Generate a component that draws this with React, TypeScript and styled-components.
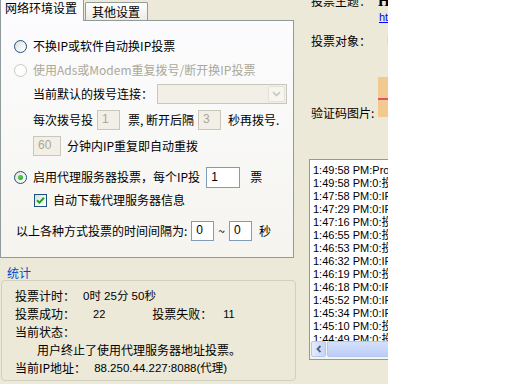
import React from 'react'
import styled, { createGlobalStyle } from 'styled-components'

const GlobalStyle = createGlobalStyle`
  html, body {
    margin: 0;
    padding: 0;
    background: #ffffff;
  }
  body {
    font-family: "Noto Sans CJK SC", sans-serif;
    font-size: 12px;
    color: #000000;
  }
`

const Screen = styled.div`
  width: 512px;
  height: 384px;
  display: flex;
  overflow: hidden;
  background: #ffffff;
`

const Window = styled.div`
  width: 388px;
  height: 384px;
  flex-shrink: 0;
  display: flex;
  overflow: hidden;
  background: #ECE9D8;
`

const LeftPane = styled.div`
  width: 297px;
  flex-shrink: 0;
  display: flex;
  flex-direction: column;
`

const TabStrip = styled.div`
  display: flex;
  align-items: flex-end;
  height: 20px;
  position: relative;
  z-index: 1;
`

const Tab = styled.div<{ $active?: boolean }>`
  box-sizing: border-box;
  height: ${({ $active }) => ($active ? 21 : 18)}px;
  margin-bottom: ${({ $active }) => ($active ? -1 : 0)}px;
  margin-left: ${({ $active }) => ($active ? 0 : 1)}px;
  padding: ${({ $active }) => ($active ? '0 6px 0 4px' : '1px 7px 0 6px')};
  border: 1px solid #919B9C;
  border-top: ${({ $active }) => ($active ? 'none' : '1px solid #919B9C')};
  border-bottom: none;
  border-radius: ${({ $active }) => ($active ? '0' : '2px 2px 0 0')};
  background: ${({ $active }) => ($active ? '#FCFCFE' : 'linear-gradient(#FFFFFF, #ECEBE6)')};
  line-height: 16px;
  white-space: nowrap;
`

const TabPanel = styled.div`
  box-sizing: border-box;
  width: 294px;
  height: 238px;
  padding-top: 14px;
  border: 1px solid #919B9C;
  background: linear-gradient(#FCFCFE, #F5F4EF);
  display: flex;
  flex-direction: column;
`

const OptionRow = styled.div<{ $top: number; $indent: number }>`
  display: flex;
  align-items: center;
  height: 22px;
  margin-top: ${({ $top }) => $top}px;
  padding-left: ${({ $indent }) => $indent}px;
  white-space: nowrap;
  line-height: 14px;
`

const Text = styled.span<{ $gap?: number; $disabled?: boolean }>`
  margin-left: ${({ $gap }) => $gap ?? 0}px;
  color: ${({ $disabled }) => ($disabled ? '#ACA899' : '#000000')};
`

const Radio = styled.span<{ $checked?: boolean; $disabled?: boolean }>`
  box-sizing: border-box;
  width: 13px;
  height: 13px;
  flex-shrink: 0;
  border-radius: 50%;
  border: 1px solid ${({ $disabled }) => ($disabled ? '#CAC8BB' : '#1C5180')};
  background: ${({ $disabled }) =>
    $disabled ? '#FFFFFF' : 'linear-gradient(135deg, #DCDCD7 0%, #FFFFFF 85%)'};
  display: flex;
  align-items: center;
  justify-content: center;
  margin-right: 6px;

  &::after {
    content: '';
    width: 5px;
    height: 5px;
    border-radius: 50%;
    background: radial-gradient(circle at 35% 35%, #55D455, #21A121);
    display: ${({ $checked }) => ($checked ? 'block' : 'none')};
  }
`

const CheckBox = styled.span`
  box-sizing: border-box;
  width: 13px;
  height: 13px;
  flex-shrink: 0;
  margin-right: 6px;
  border: 1px solid #1C5180;
  background: linear-gradient(135deg, #DCDCD7 0%, #FFFFFF 85%);
  display: flex;
  align-items: center;
  justify-content: center;
`

const TextBox = styled.div<{ $width: number; $gap?: number; $disabled?: boolean; $height?: number }>`
  box-sizing: border-box;
  width: ${({ $width }) => $width}px;
  height: ${({ $height }) => $height ?? 20}px;
  margin-left: ${({ $gap }) => $gap ?? 0}px;
  padding-left: 4px;
  border: 1px solid ${({ $disabled }) => ($disabled ? '#C9C7BA' : '#7F9DB9')};
  background: ${({ $disabled }) => ($disabled ? '#F1EFE6' : '#FFFFFF')};
  color: ${({ $disabled }) => ($disabled ? '#ACA899' : '#000000')};
  font-family: "Liberation Sans", sans-serif;
  font-size: 12px;
  line-height: ${({ $height }) => ($height ?? 20) - 3}px;
  flex-shrink: 0;
`

const ComboBox = styled.div`
  box-sizing: border-box;
  width: 130px;
  height: 20px;
  margin-left: 4px;
  border: 1px solid #C9C7BA;
  background: #F1EFE6;
  display: flex;
  justify-content: flex-end;
  padding: 1px;
`

const ComboButton = styled.div`
  box-sizing: border-box;
  width: 17px;
  height: 16px;
  border: 1px solid #E4E2D8;
  border-radius: 2px;
  background: #F6F5EF;
  display: flex;
  align-items: center;
  justify-content: center;
`

const GroupLabel = styled.div`
  margin: 8px 0 0 7px;
  height: 14px;
  line-height: 14px;
  color: #0046D5;
`

const GroupBox = styled.div`
  box-sizing: border-box;
  width: 295px;
  height: 101px;
  margin-left: 1px;
  padding-top: 6px;
  border: 1px solid #D0D0BF;
  border-radius: 4px;
  display: flex;
  flex-direction: column;
`

const StatRow = styled.div<{ $indent?: number }>`
  display: flex;
  align-items: center;
  height: 18px;
  padding-left: ${({ $indent }) => $indent ?? 13}px;
  line-height: 14px;
  white-space: nowrap;
`

const Num = styled.span<{ $gap?: number }>`
  margin-left: ${({ $gap }) => $gap ?? 0}px;
  font-family: "Liberation Sans", sans-serif;
  font-size: 11px;
`

const StatValue = styled.span<{ $gap?: number }>`
  margin-left: ${({ $gap }) => $gap ?? 0}px;
  font-family: "Liberation Sans", "Noto Sans CJK SC", sans-serif;
  font-size: 11.5px;
`

const InfoPane = styled.div`
  width: 91px;
  flex-shrink: 0;
  overflow: hidden;
  padding-left: 12px;
  display: flex;
  flex-direction: column;
`

const FieldRow = styled.div<{ $top: number; $align?: string }>`
  display: flex;
  align-items: ${({ $align }) => $align ?? 'center'};
  min-height: 14px;
  margin-top: ${({ $top }) => $top}px;
  padding-left: 2px;
  line-height: 14px;
  white-space: nowrap;
`

const FieldLabel = styled.span<{ $drop?: number }>`
  width: 67px;
  flex-shrink: 0;
  margin-bottom: ${({ $drop }) => -($drop ?? 0)}px;
`

const Title = styled.span`
  font-family: "Liberation Serif", serif;
  font-weight: bold;
  font-size: 15px;
`

const Link = styled.span`
  margin-left: 68px;
  color: #0000FF;
  text-decoration: underline;
  font-family: "Liberation Sans", sans-serif;
  font-size: 11px;
`

const Plain = styled.span<{ $gap?: number }>`
  margin-left: ${({ $gap }) => $gap ?? 0}px;
  font-family: "Liberation Sans", sans-serif;
`

const Captcha = styled.div`
  width: 40px;
  height: 40px;
  flex-shrink: 0;
  align-self: flex-start;
  position: relative;
  background-color: #FBE3BC;
  background-image: radial-gradient(#F2C98E 0.8px, transparent 1px);
  background-size: 2px 2px;
`

const CaptchaLine = styled.div`
  position: absolute;
  left: 0;
  right: 0;
  top: 21px;
  height: 2px;
  background: #E0506A;
`

const LogList = styled.div`
  box-sizing: border-box;
  width: 150px;
  height: 201px;
  margin-top: 42px;
  border: 1px solid #7F9DB9;
  background: #FFFFFF;
  display: flex;
  flex-direction: column;
  overflow: hidden;
`

const LogLines = styled.div`
  flex: 1;
  overflow: hidden;
  padding: 4px 0 0 3px;
  font-family: "Liberation Sans", "Noto Sans CJK SC", sans-serif;
  font-size: 11px;
  line-height: 13px;
  white-space: nowrap;
`

const ScrollBar = styled.div`
  height: 17px;
  flex-shrink: 0;
  display: flex;
  padding: 0 1px 1px 1px;
  background: #F5F5F0;
`

const ScrollButton = styled.div`
  box-sizing: border-box;
  width: 15px;
  height: 16px;
  border: 1px solid #B3C7F0;
  border-radius: 2px;
  background: linear-gradient(90deg, #E4EBFC, #C6D5F8);
  display: flex;
  align-items: center;
  justify-content: center;
`

const ScrollThumb = styled.div`
  box-sizing: border-box;
  flex: 1;
  height: 16px;
  margin-left: 1px;
  border: 1px solid #B3C7F0;
  border-radius: 2px;
  background: linear-gradient(#D4E0FB, #BBCDF8);
`

const WhiteSpace = styled.div`
  flex: 1;
  background: #ffffff;
`

const logs = [
  '1:49:58 PM:Proxy 列表下载完成',
  '1:49:58 PM:0:投票成功',
  '1:47:58 PM:0:IP重复',
  '1:47:29 PM:0:IP重复',
  '1:47:16 PM:0:投票成功',
  '1:46:55 PM:0:投票成功',
  '1:46:53 PM:0:投票成功',
  '1:46:32 PM:0:IP重复',
  '1:46:19 PM:0:投票成功',
  '1:46:18 PM:0:IP重复',
  '1:45:52 PM:0:IP重复',
  '1:45:34 PM:0:IP重复',
  '1:45:10 PM:0:投票成功',
  '1:44:49 PM:0:投票成功',
  '1:44:21 PM:0:IP重复',
]

function Chevron() {
  return (
    <svg width="9" height="6" viewBox="0 0 9 6">
      <path d="M1 1 L4.5 4.5 L8 1" fill="none" stroke="#C9C7BA" strokeWidth="1.6" />
    </svg>
  )
}

function Tick() {
  return (
    <svg width="9" height="9" viewBox="0 0 9 9">
      <path d="M1 4.2 L3.4 6.6 L8 1.8" fill="none" stroke="#21A121" strokeWidth="2" />
    </svg>
  )
}

function LeftArrow() {
  return (
    <svg width="6" height="8" viewBox="0 0 6 8">
      <path d="M4.5 1 L1.5 4 L4.5 7" fill="none" stroke="#4D6185" strokeWidth="1.8" />
    </svg>
  )
}

export default function App() {
  return (
    <>
      <GlobalStyle />
      <Screen>
        <Window>
          <LeftPane>
            <TabStrip>
              <Tab $active>网络环境设置</Tab>
              <Tab>其他设置</Tab>
            </TabStrip>

            <TabPanel>
              <OptionRow $top={0} $indent={13}>
                <Radio />
                <Text>不换IP或软件自动换IP投票</Text>
              </OptionRow>
              <OptionRow $top={2} $indent={13}>
                <Radio $disabled />
                <Text $disabled>使用Ads或Modem重复拨号/断开换IP投票</Text>
              </OptionRow>
              <OptionRow $top={2} $indent={32}>
                <Text>当前默认的拨号连接：</Text>
                <ComboBox>
                  <ComboButton>
                    <Chevron />
                  </ComboButton>
                </ComboBox>
              </OptionRow>
              <OptionRow $top={4} $indent={32}>
                <Text>每次拨号投</Text>
                <TextBox $width={23} $gap={4} $disabled>1</TextBox>
                <Text $gap={8}>票, 断开后隔</Text>
                <TextBox $width={23} $gap={4} $disabled>3</TextBox>
                <Text $gap={7}>秒再拨号.</Text>
              </OptionRow>
              <OptionRow $top={4} $indent={32}>
                <TextBox $width={28} $disabled>60</TextBox>
                <Text $gap={6}>分钟内IP重复即自动重拨</Text>
              </OptionRow>
              <OptionRow $top={9} $indent={13}>
                <Radio $checked />
                <Text>启用代理服务器投票，每个IP投</Text>
                <TextBox $width={34} $height={21} $gap={6}>1</TextBox>
                <Text $gap={10}>票</Text>
              </OptionRow>
              <OptionRow $top={1} $indent={33}>
                <CheckBox>
                  <Tick />
                </CheckBox>
                <Text>自动下载代理服务器信息</Text>
              </OptionRow>
              <OptionRow $top={9} $indent={15}>
                <Text>以上各种方式投票的时间间隔为:</Text>
                <TextBox $width={23} $gap={4}>0</TextBox>
                <Text $gap={4}>~</Text>
                <TextBox $width={23} $gap={4}>0</TextBox>
                <Text $gap={7}>秒</Text>
              </OptionRow>
            </TabPanel>

            <GroupLabel>统计</GroupLabel>
            <GroupBox>
              <StatRow>
                <Text>投票计时：</Text>
                <StatValue $gap={8}>0时 25分 50秒</StatValue>
              </StatRow>
              <StatRow>
                <Text>投票成功：</Text>
                <Num $gap={18}>22</Num>
                <Text $gap={47}>投票失败：</Text>
                <Num $gap={11}>11</Num>
              </StatRow>
              <StatRow>
                <Text>当前状态：</Text>
              </StatRow>
              <StatRow $indent={35}>
                <Text>用户终止了使用代理服务器地址投票。</Text>
              </StatRow>
              <StatRow>
                <Text>当前IP地址：</Text>
                <StatValue $gap={8}>88.250.44.227:8088(代理)</StatValue>
              </StatRow>
            </GroupBox>
          </LeftPane>

          <InfoPane>
            <FieldRow $top={-6}>
              <FieldLabel>投票主题：</FieldLabel>
              <Title>Hi</Title>
            </FieldRow>
            <FieldRow $top={2}>
              <Link>http://</Link>
            </FieldRow>
            <FieldRow $top={10}>
              <FieldLabel>投票对象：</FieldLabel>
              <Plain $gap={9}>I</Plain>
            </FieldRow>
            <FieldRow $top={29} $align="flex-end">
              <FieldLabel $drop={3}>验证码图片:</FieldLabel>
              <Captcha>
                <CaptchaLine />
              </Captcha>
            </FieldRow>
            <LogList>
              <LogLines>
                {logs.map((line, i) => (
                  <div key={i}>{line}</div>
                ))}
              </LogLines>
              <ScrollBar>
                <ScrollButton>
                  <LeftArrow />
                </ScrollButton>
                <ScrollThumb />
              </ScrollBar>
            </LogList>
          </InfoPane>
        </Window>
        <WhiteSpace />
      </Screen>
    </>
  )
}
